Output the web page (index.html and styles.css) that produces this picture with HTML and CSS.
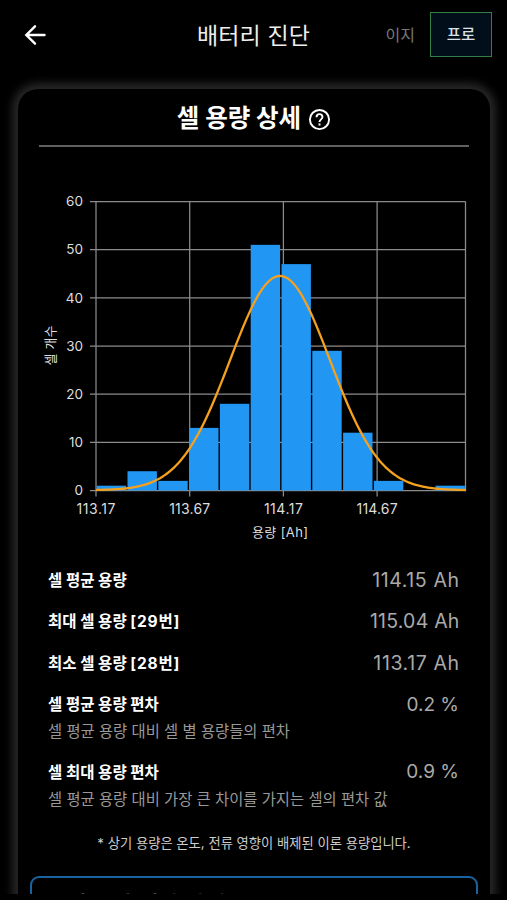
FILE: index.html
```html
<!DOCTYPE html>
<html lang="ko">
<head>
<meta charset="utf-8">
<title>배터리 진단</title>
<link rel="stylesheet" href="styles.css">
</head>
<body>
<div class="screen">
  <header class="topbar">
    <svg class="back" viewBox="0 0 24 24"><path d="M21.500 12H4M12 3.300L3.300 12l8.700 8.700"/></svg>
    <h1 class="title">배터리 진단</h1>
    <nav class="modes">
      <span class="mode">이지</span>
      <span class="mode mode-active">프로</span>
    </nav>
  </header>
  <main class="viewport">
    <section class="card">
      <div class="card-head">
        <h2>셀 용량 상세</h2>
        <svg class="help" viewBox="0 0 24 24"><circle cx="12" cy="12" r="10"/><path d="M8.900 9.600c0-1.900 1.400-3.200 3.100-3.200s3.100 1.300 3.100 3c0 2.400-3.100 2.600-3.100 5.200"/><path d="M12 16.100v2.200"/></svg>
      </div>
      <svg class="chart" viewBox="0 0 434 358" width="434" height="358">
        <g class="grid"></g>
        <g class="bars"></g>
        <path class="curve"/>
        <g class="labels"></g>
        <text class="axis-name" x="244" y="347" text-anchor="middle" textLength="56">용량 [Ah]</text>
        <text class="axis-name" transform="translate(19 155.500) rotate(-90)" text-anchor="middle" textLength="40">셀 개수</text>
      </svg>
      <dl class="stats">
        <div class="row"><dt>셀 평균 용량</dt><dd>114.15 Ah</dd></div>
        <div class="row"><dt>최대 셀 용량 <span class="cell-no">[29번]</span></dt><dd class="max">115.04 Ah</dd></div>
        <div class="row"><dt>최소 셀 용량 <span class="cell-no">[28번]</span></dt><dd>113.17 Ah</dd></div>
        <div class="row"><dt>셀 평균 용량 편차</dt><dd class="percent">0.2 %</dd></div>
        <p class="hint">셀 평균 용량 대비 셀 별 용량들의 편차</p>
        <div class="row"><dt>셀 최대 용량 편차</dt><dd class="percent">0.9 %</dd></div>
        <p class="hint">셀 평균 용량 대비 가장 큰 차이를 가지는 셀의 편차 값</p>
      </dl>
      <p class="note">* 상기 용량은 온도, 전류 영향이 배제된 이론 용량입니다.</p>
      <div class="info">셀 용량 편차 상세</div>
    </section>
  </main>
</div>
<script src="chart.js"></script>
</body>
</html>
```
FILE: styles.css
```css
* { box-sizing: border-box; margin: 0; padding: 0; }
body {
  background: #000;
  color: #fff;
  font-family: Inter, "Noto Sans CJK KR", sans-serif;
}
.screen { width: 507px; height: 900px; overflow: hidden; display: flex; flex-direction: column; }
.topbar {
  height: 69px;
  flex: none;
  display: grid;
  grid-template-columns: 150px 1fr 150px;
  align-items: center;
  padding: 0 15px 0 23px;
}
.back { width: 24px; height: 24px; fill: none; stroke: #fff; stroke-width: 2.4; stroke-linecap: round; margin-top: 1px; }
.title { font-size: 23px; font-weight: 400; text-align: center; color: #eee; letter-spacing: 0.1px; transform: translate(-4px, -1px); white-space: nowrap; }
.modes { display: flex; justify-content: flex-end; align-items: center; gap: 15px; }
.mode { font-size: 16px; line-height: 22px; color: #777; }
.mode-active {
  width: 62px; height: 45px;
  display: grid; place-items: center;
  background: #020e19; color: #d8e0e8;
  border: 1.5px solid #348044;
  font-weight: 500;
  font-size: 15.5px;
}
.viewport { flex: none; height: 825px; overflow: hidden; padding: 20px 17px 0 18px; }
.card {
  height: 900px;
  border-radius: 20px;
  background: #000;
  box-shadow: 0 0 8px 6px #262626;
}
.card-head {
  height: 58px;
  margin: 0 21px;
  border-bottom: 2px solid #606060;
  display: flex;
  justify-content: center;
  align-items: center;
  gap: 7px;
}
.card-head h2 { font-size: 24.5px; line-height: 34px; font-weight: 700; white-space: nowrap; margin-top: 1px; }
.help { width: 23px; height: 23px; fill: none; stroke: #fff; stroke-width: 2; margin-top: 4px; }
.chart { display: block; margin: 43px 0 0 18px; }
.grid line { stroke: #8c8c8c; stroke-width: 1.25; }
.bars rect { fill: #2196f3; }
.curve { fill: none; stroke: #f5a11d; stroke-width: 2.3; }
.labels text { fill: #ddd; font-size: 13.5px; }
.labels .x-label { font-size: 14px; }
.axis-name { fill: #ddd; font-size: 13px; }
.stats { padding: 0 31px 0 30px; margin-top: 10px; }
.row { display: flex; justify-content: space-between; align-items: center; height: 41.5px; white-space: nowrap; }
.row dt { font-size: 15.5px; font-weight: 700; }
.row dd { font-size: 19.5px; color: #aaa; letter-spacing: 0.6px; margin-right: -0.600px; transform: translateY(1px); }
.row .max { letter-spacing: 0.22px; }
.row .percent { font-size: 19px; letter-spacing: 0; margin-right: 0; }
.cell-no { letter-spacing: 0.8px; }
.hint { font-size: 15.350px; line-height: 22px; color: #999; margin-top: -3px; margin-bottom: 7px; white-space: nowrap; }
.note { text-align: center; font-size: 13.300px; line-height: 20px; color: #ccc; margin-top: 22px; white-space: nowrap; }
.info {
  margin: 23px 12px 0 12px;
  height: 80px;
  border: 2px solid #1a639f;
  border-radius: 9px;
  padding: 12px 34px;
  font-size: 22px;
  line-height: 28px;
  font-weight: 500;
  color: #888;
}
```
FILE: chart.js
```js
const NS = 'http://www.w3.org/2000/svg';
const left = 60, right = 429.5, top0 = 11.5, base = 300.5;
const unit = (base - top0) / 60;
function add(parent, tag, attrs, text) {
  const el = document.createElementNS(NS, tag);
  for (const k in attrs) el.setAttribute(k, attrs[k]);
  if (text !== undefined) el.textContent = text;
  document.querySelector(parent).appendChild(el);
}
for (let v = 0; v <= 60; v += 10) {
  const y = base - v * unit;
  add('.grid', 'line', { x1: left - 6, x2: right, y1: y, y2: y });
  add('.labels', 'text', { x: 47, y: y + 4.8, 'text-anchor': 'end' }, v);
}
['113.17', '113.67', '114.17', '114.67'].forEach((t, i) => {
  const x = left + i * 93.7;
  add('.grid', 'line', { x1: x, x2: x, y1: top0, y2: base + 6 });
  add('.labels', 'text', { class: 'x-label', x: x, y: 324, 'text-anchor': 'middle', textLength: i % 2 ? 41 : 39 }, t);
});
add('.grid', 'line', { x1: right, x2: right, y1: top0, y2: base });
[1, 4, 2, 13, 18, 51, 47, 29, 12, 2, 0, 1].forEach((n, i) => {
  add('.bars', 'rect', { x: left + 0.7 + i * 30.8, y: base - n * unit, width: 29.4, height: n * unit });
});
let d = '';
for (let x = left; x <= right + 0.5; x += 2) {
  const z = (x - 244) / 50;
  d += (d ? 'L' : 'M') + x + ' ' + (base - 0.3 - 214.3 * Math.exp(-z * z / 2)).toFixed(2);
}
document.querySelector('.curve').setAttribute('d', d);
```
